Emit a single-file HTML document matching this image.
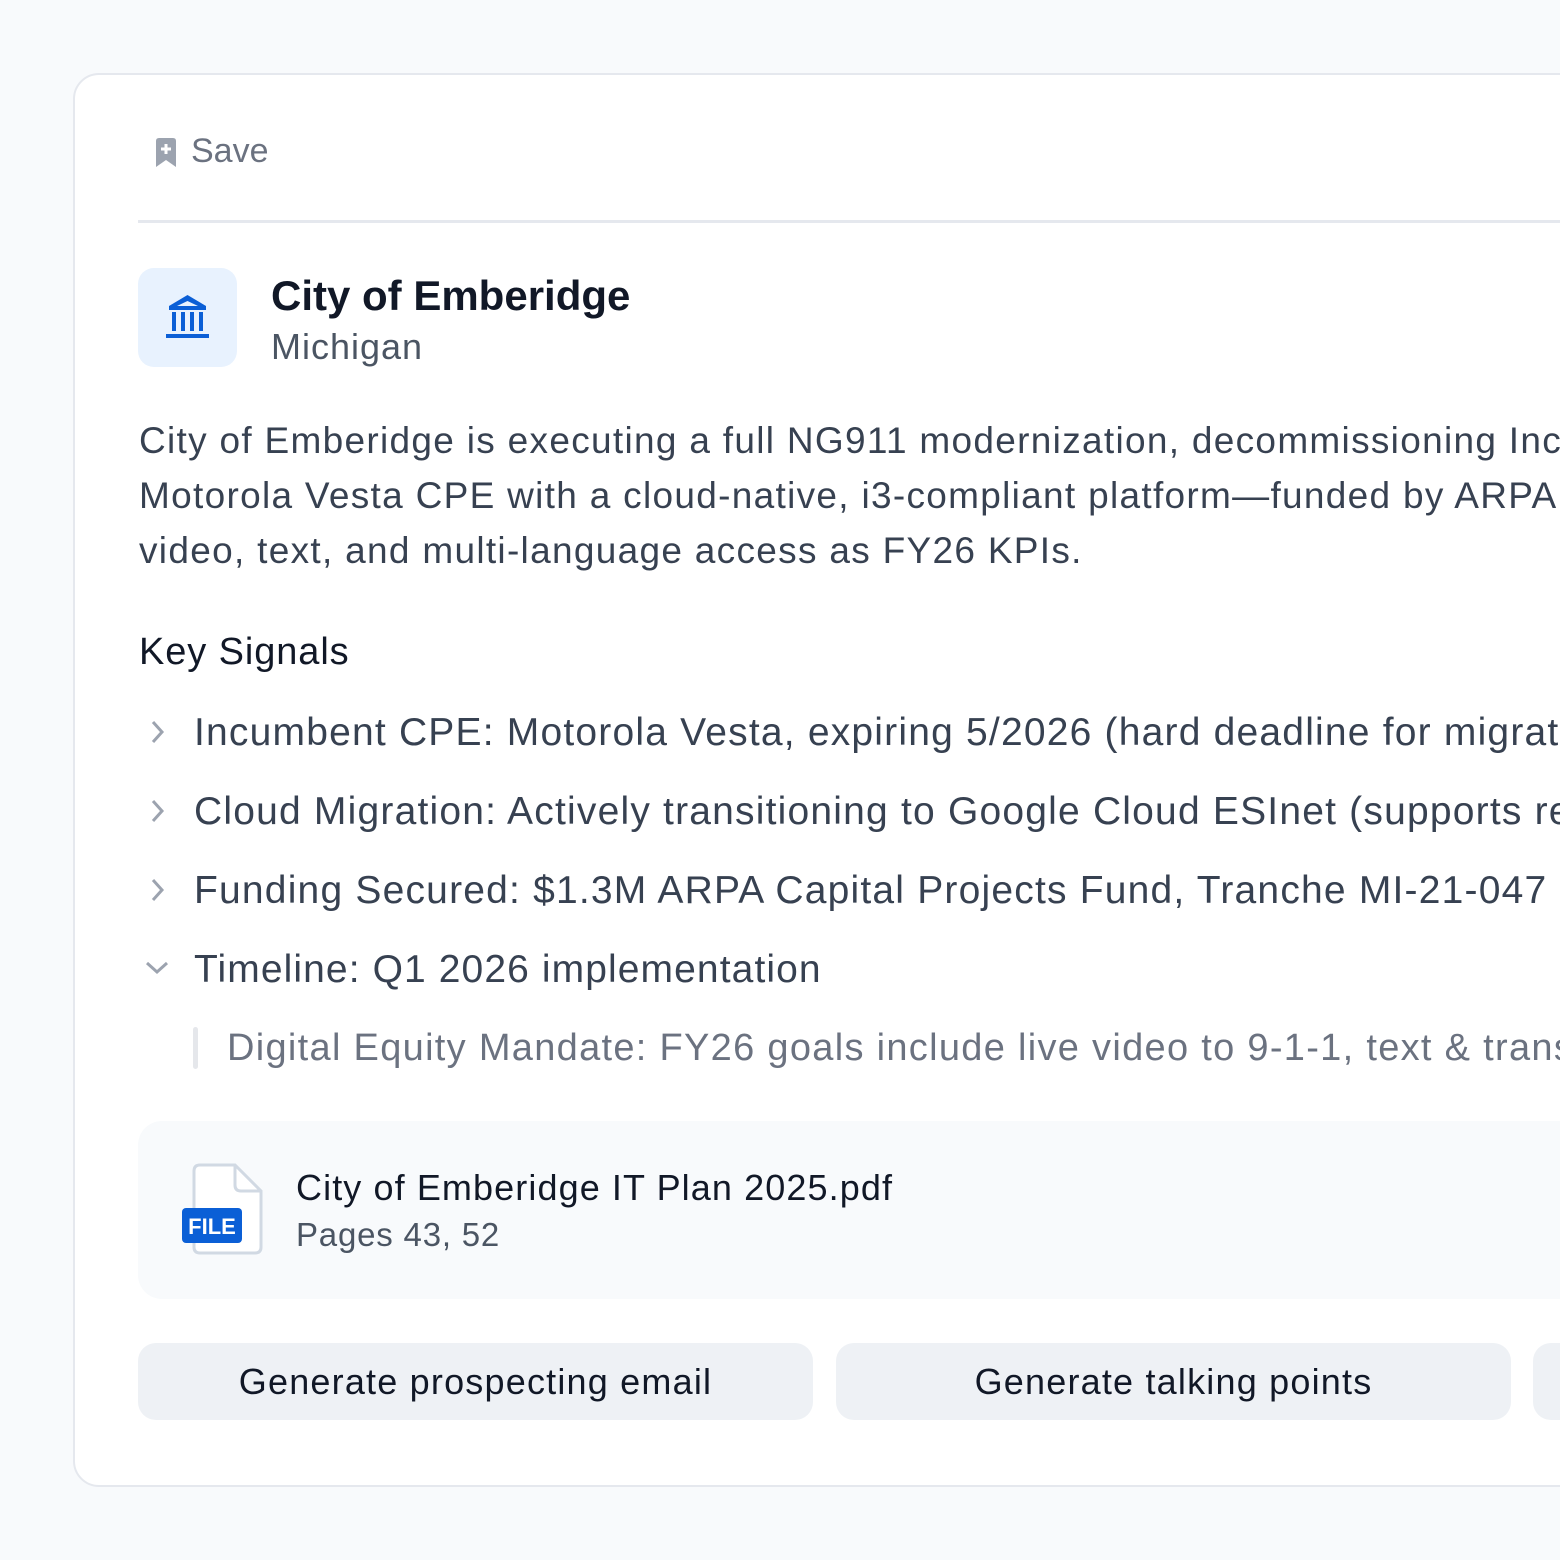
<!DOCTYPE html>
<html><head><meta charset="utf-8"><style>
html,body{margin:0;padding:0;width:1560px;height:1560px;overflow:hidden;background:#f8fafc;font-family:"Liberation Sans",sans-serif;}
.wrap{position:absolute;left:0;top:0;width:1560px;height:1560px;overflow:hidden;}
.card{position:absolute;left:73px;top:73px;width:1600px;height:1410px;border:2px solid #e5e8ee;border-radius:26px;background:#fff;}
.abs{position:absolute;white-space:nowrap;}
</style></head><body><div class="wrap">
<div class="card"></div>
<svg class="abs" style="left:153px;top:138px" width="26" height="30" viewBox="0 0 26 30"><path d="M3 3 Q3 0 6 0 H20 Q23 0 23 3 V29 L13 22 L3 29 Z" fill="#9ca3af"/><path d="M13 6 V16 M8 11 H18" stroke="#fff" stroke-width="3"/></svg>
<div class="abs" style="left:191px;top:132px;font-size:34px;color:#6b7280">Save</div>
<div class="abs" style="left:138px;top:220px;width:1430px;height:3px;background:#e5e8ee"></div>
<div class="abs" style="left:138px;top:268px;width:99px;height:99px;border-radius:16px;background:#e8f2fe"></div>
<svg class="abs" style="left:165px;top:294px" width="45" height="46" viewBox="0 0 45 46"><path d="M22.5 1 L41 12 V16 H4 V12 Z" fill="#0b5fd6"/><path d="M22.5 7 L33 12 H12 Z" fill="#e8f2fe"/><g stroke="#0b5fd6" stroke-width="4"><path d="M9 18 V37 M18 18 V37 M27 18 V37 M36 18 V37"/><path d="M1 42 H44"/></g></svg>
<div class="abs" style="left:271px;top:272px;font-size:42px;font-weight:bold;color:#111827">City of Emberidge</div>
<div class="abs" style="left:271px;top:326px;font-size:36px;color:#4b5563;letter-spacing:1px">Michigan</div>
<div class="abs" style="left:139px;top:413px;font-size:37px;line-height:55px;color:#374151;letter-spacing:1.3px">City of Emberidge is executing a full NG911 modernization, decommissioning Incumbent<br>Motorola Vesta CPE with a cloud-native, i3-compliant platform—funded by ARPA<br>video, text, and multi-language access as FY26 KPIs.</div>
<div class="abs" style="left:139px;top:631px;font-size:38px;color:#111827;letter-spacing:0.9px">Key Signals</div>
<svg class="abs" style="left:148px;top:718px" width="20" height="28"><path d="M5 4 L14 14 L5 24" fill="none" stroke="#9ca3af" stroke-width="3"/></svg>
<svg class="abs" style="left:148px;top:797px" width="20" height="28"><path d="M5 4 L14 14 L5 24" fill="none" stroke="#9ca3af" stroke-width="3"/></svg>
<svg class="abs" style="left:148px;top:876px" width="20" height="28"><path d="M5 4 L14 14 L5 24" fill="none" stroke="#9ca3af" stroke-width="3"/></svg>
<svg class="abs" style="left:144px;top:958px" width="28" height="20"><path d="M3 5 L13 14 L23 5" fill="none" stroke="#9ca3af" stroke-width="3"/></svg>
<div class="abs" style="left:194px;top:711px;font-size:39px;color:#374151;letter-spacing:1.2px">Incumbent CPE: Motorola Vesta, expiring 5/2026 (hard deadline for migration)</div>
<div class="abs" style="left:194px;top:790px;font-size:39px;color:#374151;letter-spacing:1.2px">Cloud Migration: Actively transitioning to Google Cloud ESInet (supports remote)</div>
<div class="abs" style="left:194px;top:869px;font-size:39px;color:#374151;letter-spacing:1.2px">Funding Secured: $1.3M ARPA Capital Projects Fund, Tranche MI-21-047 (c</div>
<div class="abs" style="left:194px;top:948px;font-size:39px;color:#374151;letter-spacing:1.1px">Timeline: Q1 2026 implementation</div>
<div class="abs" style="left:193px;top:1027px;width:5px;height:42px;border-radius:3px;background:#e5e7eb"></div>
<div class="abs" style="left:227px;top:1027px;font-size:38px;color:#6b7280;letter-spacing:1.3px">Digital Equity Mandate: FY26 goals include live video to 9-1-1, text &amp; translation</div>
<div class="abs" style="left:138px;top:1121px;width:1500px;height:178px;border-radius:24px;background:#f8fafc"></div>
<svg class="abs" style="left:180px;top:1163px" width="84" height="94" viewBox="0 0 84 94"><path d="M20 2 H55 L81 28 V84 Q81 90 75 90 H20 Q14 90 14 84 V8 Q14 2 20 2 Z" fill="#fff" stroke="#d1d9e3" stroke-width="3"/><path d="M55 2 V22 Q55 28 61 28 H81" fill="none" stroke="#d1d9e3" stroke-width="3"/><rect x="2" y="45" width="60" height="35" rx="4" fill="#0b5fd6"/><text x="32" y="71" text-anchor="middle" font-family="Liberation Sans" font-weight="bold" font-size="22" fill="#fff">FILE</text></svg>
<div class="abs" style="left:296px;top:1167px;font-size:36px;color:#111827;letter-spacing:1.1px">City of Emberidge IT Plan 2025.pdf</div>
<div class="abs" style="left:296px;top:1216px;font-size:33px;color:#4b5563;letter-spacing:0.8px">Pages 43, 52</div>
<div class="abs" style="left:138px;top:1343px;width:675px;height:77px;border-radius:18px;background:#eef1f5;font-size:36px;color:#111827;text-align:center;line-height:77px;letter-spacing:1.2px">Generate prospecting email</div>
<div class="abs" style="left:836px;top:1343px;width:675px;height:77px;border-radius:18px;background:#eef1f5;font-size:36px;color:#111827;text-align:center;line-height:77px;letter-spacing:1.2px">Generate talking points</div>
<div class="abs" style="left:1533px;top:1343px;width:675px;height:77px;border-radius:18px;background:#eef1f5"></div>
</div></body></html>
